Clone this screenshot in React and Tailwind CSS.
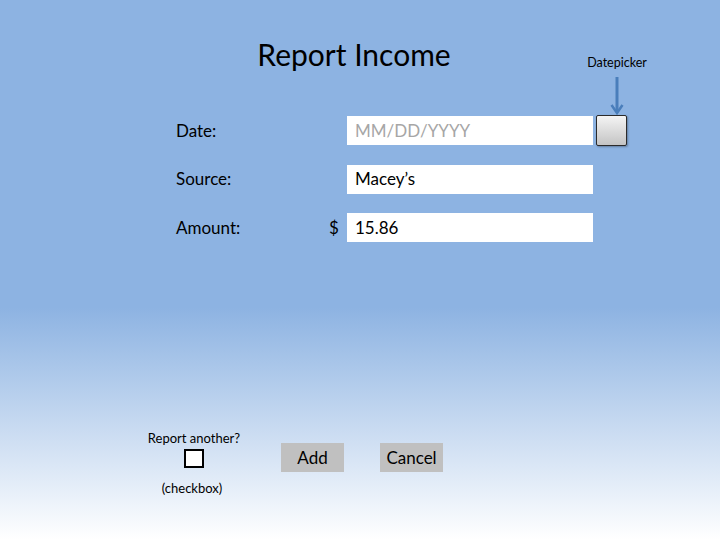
import React from 'react'

function Row({ label, prefix, children }) {
  return (
    <div className="flex items-center h-[29px] pl-[176px]">
      <div className="w-[153px] text-[17px] text-black">{label}</div>
      <div className="w-[18px] text-[17px] text-black">{prefix}</div>
      {children}
    </div>
  )
}

function Field({ value, placeholder }) {
  return (
    <div className="w-[246px] h-[29px] bg-white flex items-center pl-[8px] text-[17px]">
      {value ? <span className="text-black">{value}</span> : <span className="text-[#a6a6a6]">{placeholder}</span>}
    </div>
  )
}

export default function App() {
  return (
    <div
      className="relative w-[720px] h-[540px] overflow-hidden bg-[linear-gradient(to_bottom,#8db3e2_0%,#8db3e2_57%,#ffffff_100%)]"
      style={{ fontFamily: 'Lato, "Open Sans", sans-serif' }}
    >
      <h1 className="pt-[36px] text-center text-[30px] leading-[36px] text-black pr-[12px]">Report Income</h1>

      {/* annotation */}
      <div className="absolute left-[577px] top-[55px] w-[80px] flex flex-col items-center">
        <div className="text-[12.5px] leading-[16px] text-black">Datepicker</div>
        <svg width="14" height="40" viewBox="0 0 14 40" className="mt-[6px]">
          <line x1="7" y1="0" x2="7" y2="34" stroke="#4a7ebb" strokeWidth="3" />
          <path d="M1.5 28 L7 36 L12.5 28" fill="none" stroke="#4a7ebb" strokeWidth="2.5" />
        </svg>
      </div>

      <div className="mt-[44px] flex flex-col gap-[19.5px]">
        <Row label="Date:">
          <Field placeholder="MM/DD/YYYY" />
          <div className="ml-[3px] w-[31px] h-[31px] rounded-[2px] border-[1.5px] border-[#2b2b2b] bg-[linear-gradient(to_bottom,#f4f4f4,#c4c4c4)] shadow-[1px_1px_2px_rgba(0,0,0,0.3)]" />
        </Row>
        <Row label="Source:">
          <Field value="Macey’s" />
        </Row>
        <Row label="Amount:" prefix="$">
          <Field value="15.86" />
        </Row>
      </div>

      <div className="mt-[188px] flex items-start">
        <div className="ml-[144px] w-[100px] flex flex-col items-center">
          <div className="text-[13px] leading-[16px] text-black">Report another?</div>
          <div className="mt-[3px] w-[20px] h-[19px] border-2 border-black bg-white" />
          <div className="mt-[12px] text-[13px] leading-[16px] text-black -ml-[4px]">(checkbox)</div>
        </div>
        <div className="ml-[37px] mt-[13px] w-[63px] h-[29px] bg-[#c0c0c0] flex items-center justify-center text-[17px] text-black">Add</div>
        <div className="ml-[36px] mt-[13px] w-[63px] h-[29px] bg-[#c0c0c0] flex items-center justify-center text-[17px] text-black">Cancel</div>
      </div>
    </div>
  )
}
